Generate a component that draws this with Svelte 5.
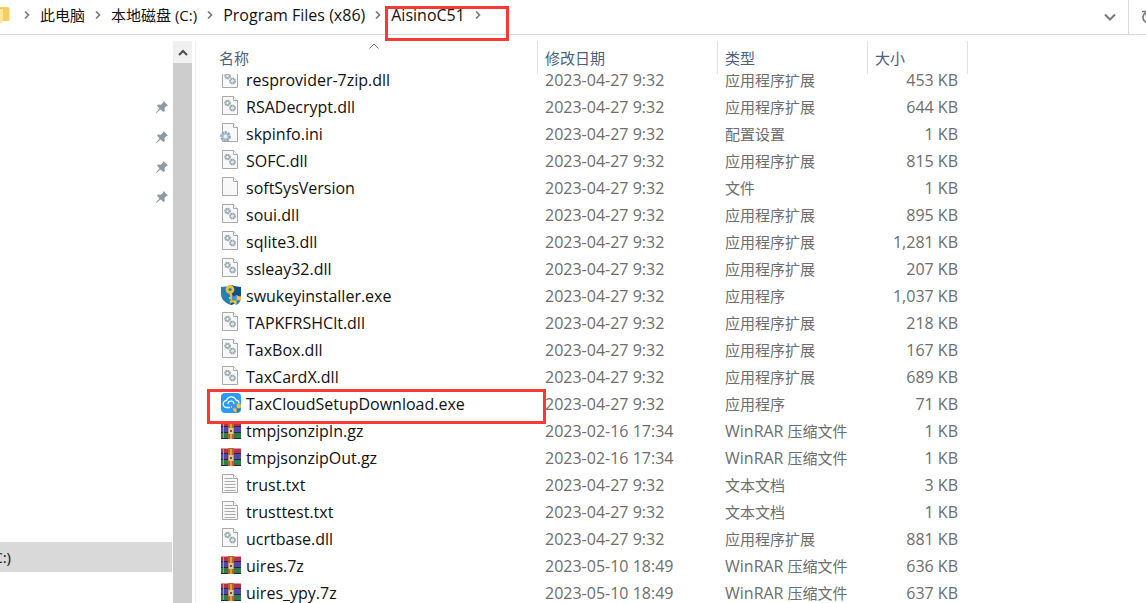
<script lang="ts">
  type IconName = 'dll' | 'ini' | 'file' | 'key' | 'cloud' | 'rar' | 'txt';

  type FileRow = {
    name: string;
    date: string;
    type: string;
    size: string;
    icon: IconName;
    app?: string;
    marked?: boolean;
  };

  const SPRING = '2023-04-27 9:32';
  const DLL = '应用程序扩展';
  const RAR = { app: 'WinRAR', type: '压缩文件', icon: 'rar' as IconName };

  const path = [
    { label: '此电脑' },
    { label: '本地磁盘 (C:)' },
    { label: 'Program Files (x86)', latin: true }
  ];

  const files: FileRow[] = [
    { name: 'resprovider-7zip.dll', date: SPRING, type: DLL, size: '453 KB', icon: 'dll' },
    { name: 'RSADecrypt.dll', date: SPRING, type: DLL, size: '644 KB', icon: 'dll' },
    { name: 'skpinfo.ini', date: SPRING, type: '配置设置', size: '1 KB', icon: 'ini' },
    { name: 'SOFC.dll', date: SPRING, type: DLL, size: '815 KB', icon: 'dll' },
    { name: 'softSysVersion', date: SPRING, type: '文件', size: '1 KB', icon: 'file' },
    { name: 'soui.dll', date: SPRING, type: DLL, size: '895 KB', icon: 'dll' },
    { name: 'sqlite3.dll', date: SPRING, type: DLL, size: '1,281 KB', icon: 'dll' },
    { name: 'ssleay32.dll', date: SPRING, type: DLL, size: '207 KB', icon: 'dll' },
    { name: 'swukeyinstaller.exe', date: SPRING, type: '应用程序', size: '1,037 KB', icon: 'key' },
    { name: 'TAPKFRSHClt.dll', date: SPRING, type: DLL, size: '218 KB', icon: 'dll' },
    { name: 'TaxBox.dll', date: SPRING, type: DLL, size: '167 KB', icon: 'dll' },
    { name: 'TaxCardX.dll', date: SPRING, type: DLL, size: '689 KB', icon: 'dll' },
    { name: 'TaxCloudSetupDownload.exe', date: SPRING, type: '应用程序', size: '71 KB', icon: 'cloud', marked: true },
    { name: 'tmpjsonzipIn.gz', date: '2023-02-16 17:34', size: '1 KB', ...RAR },
    { name: 'tmpjsonzipOut.gz', date: '2023-02-16 17:34', size: '1 KB', ...RAR },
    { name: 'trust.txt', date: SPRING, type: '文本文档', size: '3 KB', icon: 'txt' },
    { name: 'trusttest.txt', date: SPRING, type: '文本文档', size: '1 KB', icon: 'txt' },
    { name: 'ucrtbase.dll', date: SPRING, type: DLL, size: '881 KB', icon: 'dll' },
    { name: 'uires.7z', date: '2023-05-10 18:49', size: '636 KB', ...RAR },
    { name: 'uires_ypy.7z', date: '2023-05-10 18:49', size: '637 KB', ...RAR }
  ];
</script>

{#snippet chevron()}
  <svg class="chevron" viewBox="0 0 8 10" aria-hidden="true">
    <path d="M2 1.5 5.5 5 2 8.5" fill="none" stroke="#7a7a7a" stroke-width="1.7" />
  </svg>
{/snippet}

{#snippet shield()}
  <path d="M12 12.500q2.500 0 4.500-1.500 2 1.500 4.500 1.500c0 4-1.500 7-4.500 8.500-3-1.500-4.500-4.500-4.500-8.500z" fill="#2b78c8" />
  <path d="M16.500 11q2 1.500 4.500 1.500 0 2-.5 3.800h-4zM12.500 16.300h4V21c-2.200-1.100-3.500-2.800-4-4.700z" fill="#fbc53a" />
  <path d="M16.500 11q-2 1.500-4.500 1.500 0 2 .5 3.800h4z" fill="#3f94dd" />
{/snippet}

{#snippet fileIcon(icon: IconName)}
  <svg class="file-icon" viewBox="0 0 22 22" aria-hidden="true">
    {#if icon === 'key'}
      <path d="M1 3q5.500 0 10-2 4.500 2 10 2v7c0 5-4 9-10 11C5 19 1 15 1 10z" fill="#2380bd" />
      <path d="M11 1q4.500 2 10 2v7c0 5-4 9-10 11z" fill="#0e5187" />
      <circle cx="10" cy="5.500" r="3" fill="none" stroke="#f5bd38" stroke-width="2.800" />
      <path d="M10.500 9 13 18M12 13.500l-3 .8M13 17l-3 .8" fill="none" stroke="#f5bd38" stroke-width="2.400" />
      {@render shield()}
    {:else if icon === 'cloud'}
      <rect x="1" y="1" width="20" height="20" rx="4" fill="#2b9af5" />
      <path d="M10 15.500H7a3.500 3.500 0 0 1-.5-7 5 5 0 0 1 9.500-.5 3.500 3.500 0 0 1 3 3.500" fill="none" stroke="#fff" stroke-width="1.300" />
      <path d="M8 12a3 3 0 1 1 3 3" fill="none" stroke="#fff" stroke-width="1.200" />
      {@render shield()}
    {:else if icon === 'rar'}
      <path d="M1 2.500h20V8H1z" fill="#b3314d" />
      <path d="M1 8h20v5.500H1z" fill="#5147a8" />
      <path d="M1 13.500h20V20H1z" fill="#2f7d4b" />
      <path d="M1 7.500h20M1 13.500h20M1 19.500h20" stroke="#2a2438" />
      <path d="M3.500 3v16" stroke="#d99a3c" stroke-width="1" />
      <path d="M8 2h6v18H8z" fill="#b5652a" />
      <path d="M8.500 9h5v6h-5z" fill="#dbc69a" />
      <path d="M10 11h2v2h-2z" fill="#6d5436" />
      <path d="M11 3v6M11 15v5" stroke="#f0b24a" stroke-width="1.500" />
    {:else}
      <path d="M2.500 1.500h11l4 4v14h-15z" fill="#f8f8f8" stroke="#a8a8a8" />
      <path d="M13.500 1.500v4h4" fill="#fff" stroke="#a8a8a8" />
      {#if icon === 'dll'}
        <circle cx="7.500" cy="8" r="2.200" fill="#c6d2d9" stroke="#9aa9b2" stroke-width="2.200" stroke-dasharray="1.500 .4" />
        <circle cx="12.500" cy="13" r="2.500" fill="#dfe7eb" stroke="#94a4ae" stroke-width="1.800" stroke-dasharray="1.500 .4" />
        <circle cx="7.500" cy="8" r="1" fill="#f4f7f8" />
      {:else if icon === 'ini'}
        <circle cx="5.500" cy="14.500" r="4.200" fill="#b4c7d3" stroke="#94a9b6" stroke-width="2.400" stroke-dasharray="2.200 .9" />
        <circle cx="5.500" cy="14.500" r="1.700" fill="#eef3f6" />
      {:else if icon === 'txt'}
        <path d="M4.500 5.500h8M4.500 8.500h11M4.500 11.500h11M4.500 14.500h11M4.500 17.500h11" stroke="#acacac" />
      {/if}
    {/if}
  </svg>
{/snippet}

<div class="explorer">
  <header class="address-bar">
    <svg class="folder" viewBox="0 0 10 18" aria-hidden="true">
      <path d="M0 1h8l1.500 1v13H0z" fill="#f5ce62" />
      <path d="M0 3h3v13l-3 1z" fill="#ffe69a" />
    </svg>
    <nav class="crumbs" aria-label="路径">
      {#each path as crumb}
        {@render chevron()}
        <a href="#top" class:latin={crumb.latin}>{crumb.label}</a>
      {/each}
      {@render chevron()}
      <span class="current">
        <a href="#top" class="latin">AisinoC51</a>
        {@render chevron()}
      </span>
    </nav>
    <button class="history" aria-label="以前的位置">
      <svg viewBox="0 0 12 8" aria-hidden="true">
        <path d="M1 1.500 6 6.500 11 1.500" fill="none" stroke="#777" stroke-width="2" />
      </svg>
    </button>
    <button class="refresh" aria-label="刷新">
      <svg viewBox="0 0 14 16" aria-hidden="true">
        <path d="M5 3.500a5.500 5.500 0 1 0 5 0M1 2.500h4.500V7" fill="none" stroke="#777" stroke-width="1.600" />
      </svg>
    </button>
  </header>

  <div class="content">
    <aside class="nav-pane">
      <ul class="pins">
        {#each { length: 4 } as _}
          <li>
            <svg viewBox="0 0 14 14" aria-hidden="true">
              <path d="M8.500 1 13 5.500 11.500 6l-2 2 .3 3-1.300 1L5.500 9.500 1.500 13 1 12.500 4.500 8.500 2 5.500 3 4.500l3 .2 2-2z" fill="#8c9aa5" />
            </svg>
          </li>
        {/each}
      </ul>
      <a class="drive" href="#top"><span>本地磁盘 (C:)</span></a>
    </aside>
    <div class="scrollbar">
      <button aria-label="向上滚动">
        <svg viewBox="0 0 10 7" aria-hidden="true">
          <path d="M1 6 5 2 9 6" fill="none" stroke="#505050" stroke-width="2" />
        </svg>
      </button>
    </div>

    <main class="file-pane">
      <table>
        <thead>
          <tr>
            <th scope="col">
              <svg class="sort" viewBox="0 0 10 6" aria-hidden="true">
                <path d="M.5 5.500 5 1l4.500 4.500" fill="none" stroke="#777" />
              </svg>
              名称
            </th>
            <th scope="col">修改日期</th>
            <th scope="col">类型</th>
            <th scope="col">大小</th>
          </tr>
        </thead>
        <tbody>
          {#each files as file}
            <tr>
              <td class="name latin" class:marked={file.marked}>
                {@render fileIcon(file.icon)}
                {file.name}
              </td>
              <td class="latin">{file.date}</td>
              <td>
                {#if file.app}<span class="latin">{file.app}</span>{/if}
                {file.type}
              </td>
              <td class="size latin">{file.size}</td>
            </tr>
          {/each}
        </tbody>
      </table>
    </main>
  </div>
</div>

<style>
  :global(body) {
    margin: 0;
    background: #fff;
  }

  .explorer {
    display: flex;
    flex-direction: column;
    height: 100vh;
    overflow: hidden;
    font: 15px/20px 'Open Sans', 'Noto Sans CJK SC', sans-serif;
    color: #111;
  }

  .latin {
    font-size: 16px;
  }

  a {
    color: inherit;
    text-decoration: none;
  }

  button {
    display: flex;
    align-items: center;
    justify-content: center;
    padding: 0;
    border: 0;
    background: none;
  }

  .address-bar {
    display: flex;
    align-items: center;
    flex: none;
    height: 34px;
    border-bottom: 1px solid #d9d9d9;
  }

  .folder {
    width: 10px;
    height: 18px;
    margin-bottom: 4px;
  }

  .crumbs {
    display: flex;
    align-items: center;
    flex: 1;
    padding: 0 0 4px 13px;
    white-space: nowrap;
  }

  .chevron {
    flex: none;
    width: 8px;
    height: 10px;
    margin-right: 9px;
  }

  .crumbs a {
    margin-right: 9px;
  }

  .current {
    position: relative;
    display: flex;
    align-items: center;
  }

  .current::after {
    content: '';
    position: absolute;
    inset: 1px -18px -16px -6px;
    border: 3px solid #f73a36;
    pointer-events: none;
  }

  .history {
    width: 37px;
    height: 34px;
  }

  .history svg {
    width: 12px;
    height: 8px;
  }

  .refresh {
    justify-content: flex-start;
    width: 18px;
    height: 34px;
    padding-left: 12px;
    border-left: 1px solid #d9d9d9;
    overflow: hidden;
  }

  .refresh svg {
    flex: none;
    width: 14px;
    height: 16px;
  }

  .content {
    display: flex;
    flex: 1;
    min-height: 0;
    padding-top: 6px;
  }

  .nav-pane {
    display: flex;
    flex-direction: column;
    justify-content: space-between;
    width: 172px;
    margin-right: 1px;
  }

  .pins {
    margin: 0;
    padding: 51px 0 0;
    list-style: none;
  }

  .pins li {
    display: flex;
    align-items: center;
    justify-content: flex-end;
    height: 30px;
    padding-right: 3px;
  }

  .pins svg {
    width: 14px;
    height: 14px;
  }

  .drive {
    display: flex;
    align-items: center;
    height: 30px;
    margin-bottom: 31px;
    background: #d9d9d9;
    overflow: hidden;
  }

  .drive span {
    display: flex;
    justify-content: flex-end;
    width: 11px;
    white-space: nowrap;
  }

  .scrollbar {
    width: 19px;
    margin-right: 3px;
    background: #cdcdcd;
  }

  .scrollbar button {
    width: 100%;
    height: 22px;
    background: #f0f0f0;
  }

  .scrollbar svg {
    width: 10px;
    height: 7px;
  }

  .file-pane {
    flex: 1;
    min-width: 0;
    padding-left: 15px;
    border-left: 1px solid #f0f0f0;
    overflow: hidden;
  }

  table,
  tbody {
    display: block;
  }

  thead {
    position: relative;
    z-index: 1;
    display: block;
    background: #fff;
  }

  tr {
    display: grid;
    grid-template-columns: 327px 180px 150px 100px;
  }

  th {
    position: relative;
    height: 33px;
    padding-left: 7px;
    box-sizing: border-box;
    border-right: 1px solid #e2e2e2;
    font-weight: 400;
    line-height: 32px;
    text-align: left;
    color: #4c607a;
  }

  th:first-child {
    padding-left: 8px;
  }

  .sort {
    position: absolute;
    top: 2px;
    left: calc(50% - 5px);
    width: 10px;
    height: 6px;
  }

  /* the list is scrolled part of a row below the header */
  tbody {
    margin-top: -7px;
  }

  td {
    padding: 0 10px 0 7px;
    line-height: 27px;
    white-space: nowrap;
    color: #6d6d6d;
  }

  .name {
    position: relative;
    display: flex;
    align-items: center;
    gap: 4px;
    padding-left: 9px;
    color: #111;
  }

  .marked::after {
    content: '';
    position: absolute;
    z-index: 1;
    inset: -2px -8px -6px -4px;
    border: 3px solid #f73a36;
    pointer-events: none;
  }

  .file-icon {
    flex: none;
    width: 22px;
    height: 22px;
    margin-bottom: 4px;
  }

  .size {
    text-align: right;
  }
</style>
